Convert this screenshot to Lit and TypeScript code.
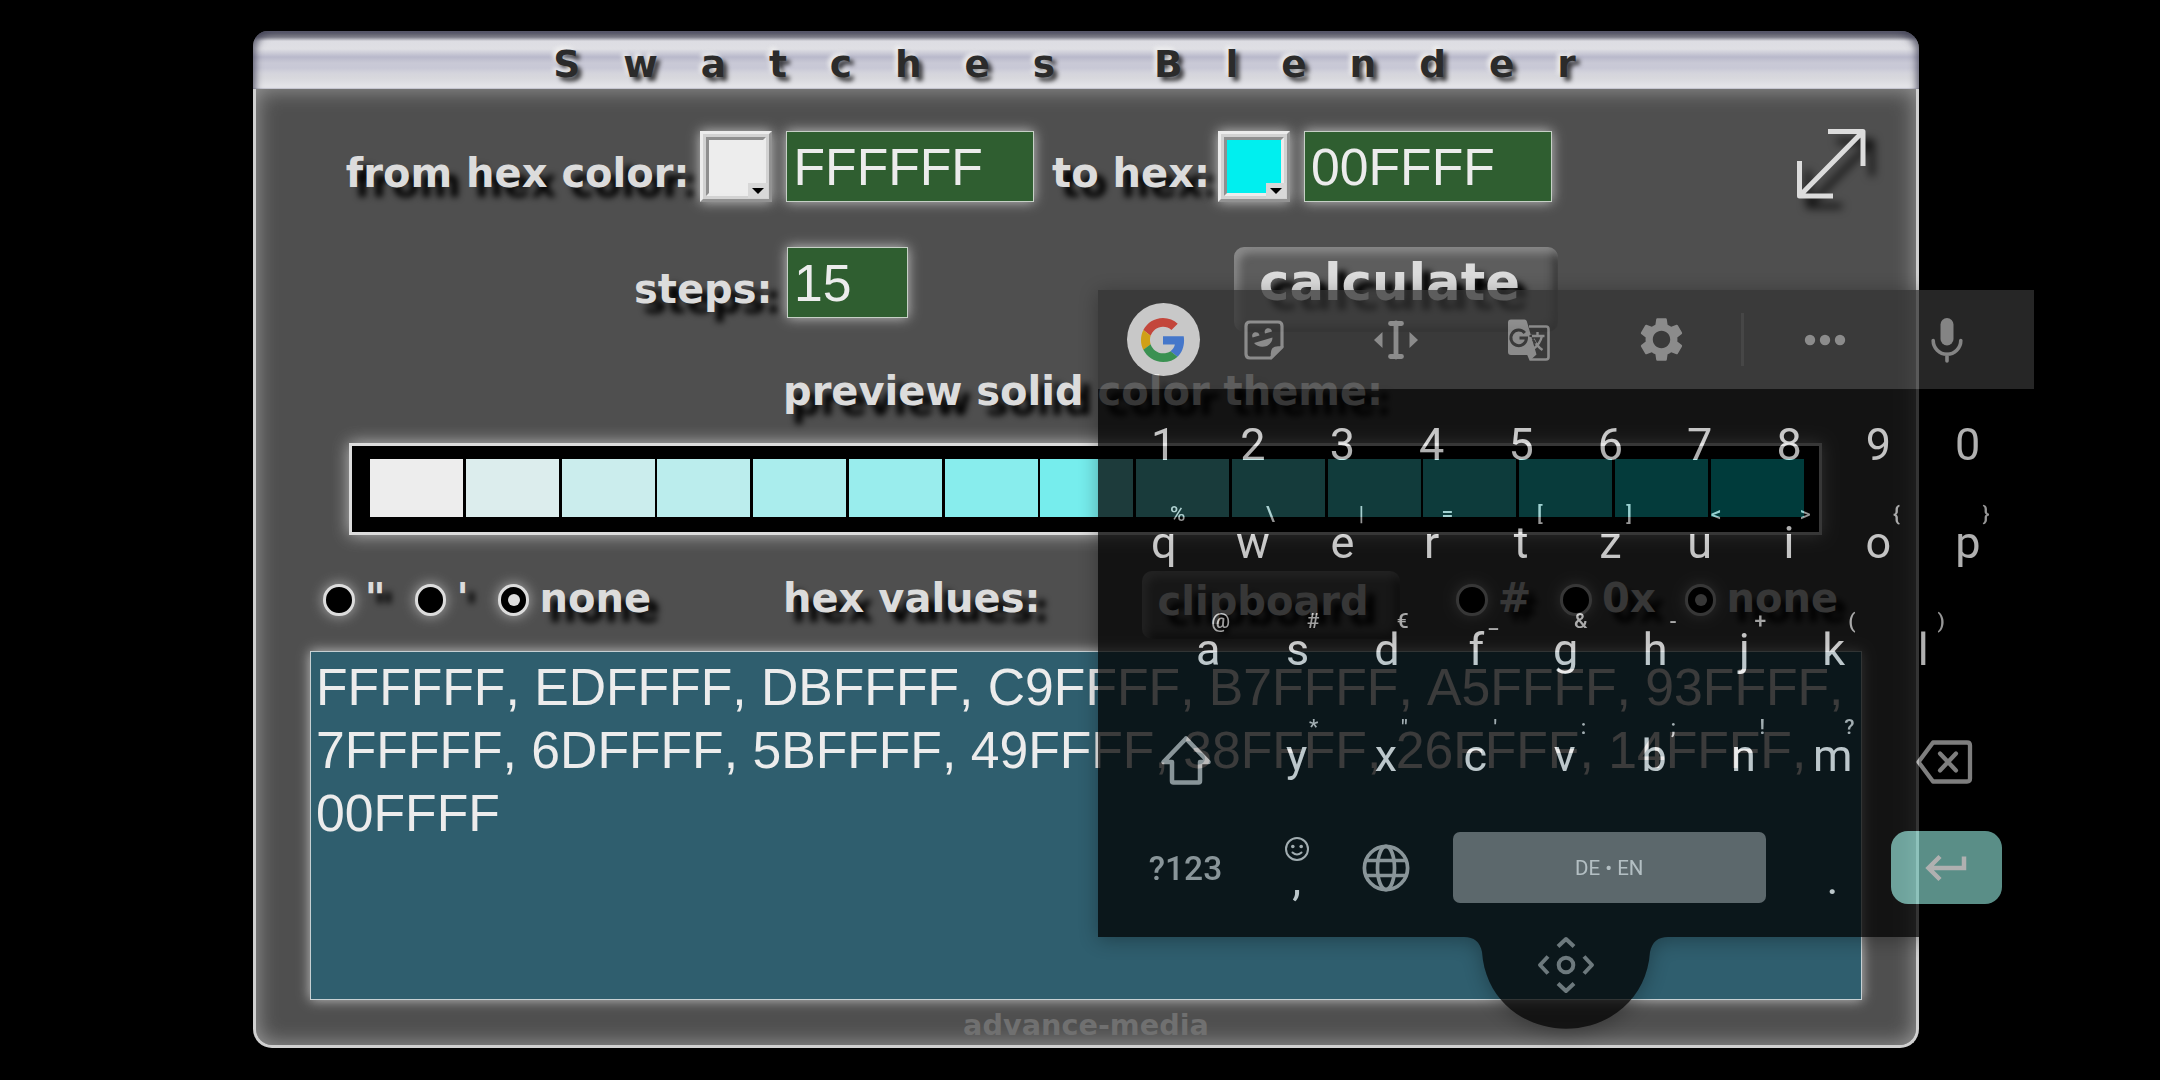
import { LitElement, html, css } from "lit";
import { customElement, property, state } from "lit/decorators.js";
import { classMap } from "lit/directives/class-map.js";

type Key = [string, string?];

const DIGITS: Key[] = [..."1234567890"].map((d) => [d] as Key);
const ROW_Q: Key[] = [
  ["q", "%"],
  ["w", "\\"],
  ["e", "|"],
  ["r", "="],
  ["t", "["],
  ["z", "]"],
  ["u", "<"],
  ["i", ">"],
  ["o", "{"],
  ["p", "}"],
];
const ROW_A: Key[] = [
  ["a", "@"],
  ["s", "#"],
  ["d", "€"],
  ["f", "_"],
  ["g", "&"],
  ["h", "-"],
  ["j", "+"],
  ["k", "("],
  ["l", ")"],
];
const ROW_Y: Key[] = [
  ["y", "*"],
  ["x", '"'],
  ["c", "'"],
  ["v", ":"],
  ["b", ";"],
  ["n", "!"],
  ["m", "?"],
];

@customElement("color-picker-button")
export class ColorPickerButton extends LitElement {
  static styles = css`
    :host {
      display: block;
      flex: none;
      box-sizing: border-box;
      width: 72px;
      height: 71px;
      padding: 3px;
      border: 3px solid;
      border-color: #ececec #929292 #929292 #ececec;
      background: #d2d2d2;
      box-shadow: 0 0 12px rgba(236, 236, 236, 0.75);
    }

    .well {
      position: relative;
      box-sizing: border-box;
      height: 59px;
      border: 3px solid;
      border-color: #8f8f8f #ececec #ececec #8f8f8f;
    }

    .drop {
      position: absolute;
      right: -5px;
      bottom: -5px;
      display: block;
      background: #d8d8d8;
    }
  `;

  @property() color = "#fff";

  render() {
    return html`
      <div class="well" style="background:${this.color}">
        <svg class="drop" width="20" height="15" viewBox="0 0 20 15">
          <path d="M4 5h12l-6 6z" fill="#000" />
        </svg>
      </div>
    `;
  }
}

@customElement("floating-keyboard")
export class FloatingKeyboard extends LitElement {
  static styles = css`
    :host {
      display: block;
      width: 936px;
      opacity: 0.75;
      filter: drop-shadow(0 3px 10px rgba(0, 0, 0, 0.4));
      font-family: Roboto, sans-serif;
      font-weight: 400;
      color: #ebebeb;
    }

    svg {
      display: block;
      flex: none;
    }

    .toolbar {
      display: flex;
      align-items: center;
      box-sizing: border-box;
      height: 99px;
      padding-left: 28.5px;
      background: #333;
      color: #a0a0a0;
    }

    .google {
      display: flex;
      align-items: center;
      justify-content: center;
      width: 73.5px;
      height: 73.5px;
      border-radius: 50%;
      background: #f1f1f1;
    }

    .tool {
      display: flex;
      justify-content: center;
      width: 132.6px;
    }

    .tool.first {
      margin-left: -2.5px;
    }

    .divider {
      width: 3px;
      height: 53px;
      margin-left: 13px;
      background: #444;
    }

    .dots {
      margin-left: 60px;
    }

    .mic {
      margin-left: 84px;
      color: #b0b0b0;
    }

    .keys {
      box-sizing: border-box;
      height: 548px;
      padding: 29.5px 21px 0;
      background: #000;
    }

    .row {
      display: flex;
      height: 107px;
    }

    .row.digits {
      height: 98px;
    }

    .row.inset {
      padding-left: 44.7px;
      height: 106px;
    }

    .row.letters {
      height: 101.5px;
    }

    .row.bottom {
      height: 73px;
      align-items: center;
    }

    .key {
      position: relative;
      width: 89.35px;
      font-size: 45px;
      line-height: 52px;
      text-align: center;
    }

    .hint {
      position: absolute;
      right: 23px;
      top: -15px;
      font-size: 21px;
      font-weight: 500;
      line-height: 24px;
      color: #c8c8c8;
    }

    .wide {
      display: flex;
      justify-content: center;
      width: 133px;
      color: #a8a8a8;
    }

    .shift {
      margin-top: 5px;
    }

    .back {
      margin-top: 9px;
    }

    .symbols {
      font-size: 33.5px;
      font-weight: 500;
      line-height: 40px;
      padding-top: 3px;
    }

    .comma,
    .globe,
    .period {
      display: flex;
      width: 89.35px;
      flex-direction: column;
      align-items: center;
      font-size: 45px;
      line-height: 52px;
      color: #ebebeb;
    }

    .comma {
      height: 65px;
      margin-top: 2px;
      color: #c8c8c8;
    }

    .comma span {
      margin-top: -8px;
      color: #ebebeb;
    }

    .globe {
      color: #a8a8a8;
    }

    .period {
      padding-top: 22px;
    }

    .space {
      width: 313px;
      height: 71px;
      margin: 0 22px;
      border-radius: 7px;
      background: #6c6c6c;
      color: #e0e0e0;
      font-size: 20.5px;
      line-height: 72px;
      text-align: center;
    }

    .enter {
      display: flex;
      align-items: center;
      justify-content: center;
      width: 111px;
      height: 73px;
      margin-left: 13.5px;
      border-radius: 17px;
      background: #78beb5;
      color: #ebebeb;
    }

    .handle {
      margin: -1px 0 0 366px;
    }
  `;

  private renderKeys(keys: Key[]) {
    return keys.map(
      ([label, hint]) => html`
        <div class="key">
          ${label}${hint ? html`<span class="hint">${hint}</span>` : null}
        </div>
      `
    );
  }

  private renderToolbar() {
    return html`
      <div class="toolbar">
        <div class="google">
          <svg width="44" height="44" viewBox="0 0 48 48">
            <path
              fill="#EA4335"
              d="M24 9.5c3.54 0 6.71 1.22 9.21 3.6l6.85-6.85C35.9 2.38 30.47 0 24 0 14.62 0 6.51 5.38 2.56 13.22l7.98 6.19C12.43 13.72 17.74 9.5 24 9.5z"
            />
            <path
              fill="#4285F4"
              d="M46.98 24.55c0-1.57-.15-3.09-.38-4.55H24v9.02h12.94c-.58 2.96-2.26 5.48-4.78 7.18l7.73 6c4.51-4.18 7.09-10.36 7.09-17.65z"
            />
            <path
              fill="#FBBC05"
              d="M10.53 28.59c-.48-1.45-.76-2.99-.76-4.59s.27-3.14.76-4.59l-7.98-6.19C.92 16.46 0 20.12 0 24c0 3.88.92 7.54 2.56 10.78l7.97-6.19z"
            />
            <path
              fill="#34A853"
              d="M24 48c6.48 0 11.93-2.13 15.89-5.81l-7.73-6c-2.15 1.45-4.92 2.3-8.16 2.3-6.26 0-11.57-4.22-13.47-9.91l-7.98 6.19C6.51 42.62 14.62 48 24 48z"
            />
          </svg>
        </div>
        <div class="tool first">
          <svg width="42" height="42" viewBox="0 0 42 42">
            <path
              d="M7 3h28q4 0 4 4v21L28 39H7q-4 0-4-4V7q0-4 4-4z"
              fill="none"
              stroke="currentColor"
              stroke-width="3.2"
            />
            <path
              d="M39 28h-4q-6.5 0-6.5 6.500v4.500z"
              fill="currentColor"
              stroke="currentColor"
              stroke-width="1.5"
            />
            <path
              d="M9.500 18.500a3.700 3.700 0 1 1 7-2zM22 14.500a3.700 3.700 0 1 1 7-2zM11 24l18.500-5.500q0 5.500-5.500 8.500-8 2.500-13-3z"
              fill="currentColor"
            />
          </svg>
        </div>
        <div class="tool">
          <svg width="46" height="40" viewBox="0 0 46 40">
            <path
              d="M17.5 3.5h11M17.5 36.5h11M23 3v34"
              fill="none"
              stroke="currentColor"
              stroke-width="4.8"
              stroke-linecap="round"
            />
            <path d="M9.5 12v16L1 20zM36.5 12v16l8.5-8z" fill="currentColor" />
          </svg>
        </div>
        <div class="tool">
          <svg width="44" height="44" viewBox="0 0 44 44">
            <path
              d="M22 8.5h17q2.500 0 2.500 2.500v28q0 2.500-2.500 2.500H23.500L20 33"
              fill="none"
              stroke="currentColor"
              stroke-width="2.6"
            />
            <path
              d="M4 1.500h13.500q1.800 0 2.300 1.800l9.700 33.200-6 5.500-1.800-5H4q-3 0-3-3v-29.500q0-3 3-3z"
              fill="currentColor"
            />
            <path
              d="M17.800 15A7.800 7.800 0 1 0 19.500 20H12.500"
              fill="none"
              stroke="#333"
              stroke-width="3"
            />
            <path
              d="M24 18h13.500M30.500 14v4M35 18q-2 8.500-9.500 13.500M26.500 21q3 7 9 11"
              fill="none"
              stroke="currentColor"
              stroke-width="2.4"
            />
            <path
              d="M22.500 18h2.500M26 21.500l2.500 4"
              fill="none"
              stroke="#333"
              stroke-width="2"
            />
          </svg>
        </div>
        <div class="tool">
          <svg width="51" height="51" viewBox="0 0 24 24">
            <path
              fill="currentColor"
              d="M19.43 12.98c.04-.32.07-.64.07-.98s-.03-.66-.07-.98l2.11-1.65c.19-.15.24-.42.12-.64l-2-3.46c-.12-.22-.39-.3-.61-.22l-2.49 1c-.52-.4-1.08-.73-1.69-.98l-.38-2.65C14.46 2.18 14.25 2 14 2h-4c-.25 0-.46.18-.49.42l-.38 2.65c-.61.25-1.17.59-1.69.98l-2.49-1c-.23-.09-.49 0-.61.22l-2 3.46c-.13.22-.07.49.12.64l2.11 1.65c-.04.32-.07.65-.07.98s.03.66.07.98l-2.11 1.65c-.19.15-.24.42-.12.64l2 3.46c.12.22.39.3.61.22l2.49-1c.52.4 1.08.73 1.69.98l.38 2.65c.03.24.24.42.49.42h4c.25 0 .46-.18.49-.42l.38-2.65c.61-.25 1.17-.59 1.69-.98l2.49 1c.23.09.49 0 .61-.22l2-3.46c.12-.22.07-.49-.12-.64l-2.11-1.65zM12 16.1c-2.26 0-4.1-1.84-4.1-4.1s1.84-4.1 4.1-4.1 4.1 1.84 4.1 4.1-1.84 4.1-4.1 4.1z"
            />
          </svg>
        </div>
        <div class="divider"></div>
        <svg class="dots" width="42" height="12" viewBox="0 0 42 12">
          <circle cx="6" cy="6" r="5.2" fill="currentColor" />
          <circle cx="21" cy="6" r="5.2" fill="currentColor" />
          <circle cx="36" cy="6" r="5.2" fill="currentColor" />
        </svg>
        <svg class="mic" width="34" height="46" viewBox="0 0 34 46">
          <rect x="10.5" y="1" width="13" height="27.5" rx="6.5" fill="currentColor" />
          <path
            d="M3.200 23.500a13.800 13.800 0 0 0 27.600 0M17 37v7"
            fill="none"
            stroke="currentColor"
            stroke-width="3.6"
            stroke-linecap="round"
          />
        </svg>
      </div>
    `;
  }

  render() {
    return html`
      ${this.renderToolbar()}
      <div class="keys">
        <div class="row digits">${this.renderKeys(DIGITS)}</div>
        <div class="row">${this.renderKeys(ROW_Q)}</div>
        <div class="row inset">${this.renderKeys(ROW_A)}</div>
        <div class="row letters">
          <div class="wide">
            <svg class="shift" width="52" height="50" viewBox="0 0 52 50">
              <path
                d="M26 3.500L3.500 27H12v19q0 1.500 1.500 1.500h25q1.500 0 1.500-1.500V27h8.500z"
                fill="none"
                stroke="currentColor"
                stroke-width="4.5"
                stroke-linejoin="round"
              />
            </svg>
          </div>
          ${this.renderKeys(ROW_Y)}
          <div class="wide">
            <svg class="back" width="58" height="46" viewBox="0 0 58 46">
              <path
                d="M18 3.500h34q3 0 3 3v33q0 3-3 3H18L3.500 23z"
                fill="none"
                stroke="currentColor"
                stroke-width="4.3"
                stroke-linejoin="round"
              />
              <path
                d="M25 14.500l16 17M41 14.500l-16 17"
                stroke="currentColor"
                stroke-width="4.3"
                stroke-linecap="round"
              />
            </svg>
          </div>
        </div>
        <div class="row bottom">
          <div class="wide symbols">?123</div>
          <div class="comma">
            <svg width="26" height="26" viewBox="0 0 26 26">
              <circle
                cx="13"
                cy="13"
                r="11"
                fill="none"
                stroke="currentColor"
                stroke-width="2"
              />
              <circle cx="8.8" cy="10.5" r="1.8" fill="currentColor" />
              <circle cx="17.2" cy="10.5" r="1.8" fill="currentColor" />
              <path
                d="M8.500 16.500q4.500 4 9 0"
                fill="none"
                stroke="currentColor"
                stroke-width="2"
                stroke-linecap="round"
              />
            </svg>
            <span>,</span>
          </div>
          <div class="globe">
            <svg width="48" height="48" viewBox="0 0 48 48">
              <g fill="none" stroke="currentColor" stroke-width="3.7">
                <circle cx="24" cy="24" r="21.6" />
                <ellipse cx="24" cy="24" rx="8.5" ry="21.6" />
                <path d="M4 16.500h40M4 31.500h40" />
              </g>
            </svg>
          </div>
          <div class="space">DE • EN</div>
          <div class="period"><span>.</span></div>
          <div class="enter">
            <svg width="44" height="28" viewBox="0 0 44 28">
              <path
                d="M40 2.500v11.500H5M16 2.500L4.500 14 16 25.500"
                fill="none"
                stroke="currentColor"
                stroke-width="4.5"
              />
            </svg>
          </div>
        </div>
      </div>
      <svg class="handle" width="204" height="93" viewBox="0 0 204 93">
        <path
          d="M0 0H204V1C194 1 188 6 186 16C183 62 146 92.700 102 92.700S21 62 18 16C16 6 10 1 0 1z"
          fill="#000"
        />
        <g
          fill="none"
          stroke="#828282"
          stroke-width="4"
          stroke-linejoin="round"
        >
          <circle cx="102" cy="29" r="7.3" />
          <path
            d="M94 10.500l8-7.500 8 7.500M94 47.500l8 7.500 8-7.500M84 20.500L76 29l8 8.500M120 20.500l8 8.500-8 8.500"
          />
        </g>
      </svg>
    `;
  }
}

@customElement("app-root")
export class SwatchesBlender extends LitElement {
  static styles = css`
    :host {
      display: block;
      position: relative;
      box-sizing: border-box;
      width: 2160px;
      height: 1080px;
      padding: 31px 0 0 253px;
      overflow: hidden;
      background: #000;
      color: #dcdcdc;
      font: bold 40px/46px "DejaVu Sans", Verdana, sans-serif;
    }

    .panel {
      width: 1666px;
    }

    header {
      height: 58px;
      border-radius: 15px 18px 0 0;
      background: linear-gradient(
        #8a8a98 0,
        #73737f 2px,
        #84848f 6px,
        #dddde3 10px,
        #dfdfe4 18px,
        #b9b9cb 26px,
        #c9c9d6 32px,
        #c8c8d6 37px,
        #d4d4dc 42px,
        #d8d8dd 47px,
        #e4e4e8 55px,
        #e0e0e6 57px,
        #aaaab8 58px
      );
      box-shadow: inset 7px 5px 7px -4px rgba(60, 60, 80, 0.7),
        inset -7px 5px 7px -4px rgba(60, 60, 80, 0.7);
      color: #2b2b2b;
      font-size: 37.5px;
      line-height: 66px;
      letter-spacing: 42.9px;
      text-align: center;
      white-space: nowrap;
      text-shadow: -3px -3px 4px rgba(240, 240, 240, 0.9),
        4px 4px 4px rgba(0, 0, 0, 0.7);
    }

    main {
      box-sizing: border-box;
      height: 959px;
      padding-top: 42px;
      border: solid #d0d0d0;
      border-width: 0 3px 3px;
      border-radius: 0 0 19px 19px;
      background: #4f4f4f;
      box-shadow: inset 0 0 22px rgba(190, 190, 190, 0.7);
      text-shadow: 9px 10px 6px #000;
      white-space: nowrap;
    }

    .row {
      display: flex;
      align-items: flex-start;
    }

    .caption {
      padding-top: 18.5px;
      text-align: right;
    }

    .from {
      width: 433.5px;
      margin-right: 10.5px;
    }

    .to {
      width: 176px;
      margin-right: 7.5px;
    }

    .steps {
      width: 516.5px;
      margin-right: 14px;
    }

    input,
    textarea {
      display: block;
      box-sizing: border-box;
      margin: 0;
      border: 1.5px solid rgba(236, 236, 236, 0.8);
      border-radius: 0;
      outline: none;
      color: #ececec;
      font: 51.7px/63px "Liberation Sans", Arial, sans-serif;
      font-kerning: none;
      box-shadow: 0 0 12px rgba(236, 236, 236, 0.75);
    }

    input {
      height: 71px;
      padding: 0 6.5px;
      background: #2f5e30;
    }

    .hex {
      width: 248px;
      margin-left: 14px;
    }

    .count {
      width: 121.5px;
    }

    .expand {
      margin: -2px 0 0 245px;
      filter: drop-shadow(9px 10px 4px rgba(0, 0, 0, 0.8));
    }

    .second {
      height: 85px;
      margin-top: 45px;
    }

    button {
      display: block;
      box-sizing: border-box;
      margin: 0;
      border: 0;
      border-radius: 10px;
      background: #5d5d5d;
      box-shadow: inset 5px 6px 9px rgba(170, 170, 170, 0.6),
        inset -5px -5px 8px rgba(45, 45, 45, 0.8);
      color: inherit;
      font: inherit;
      text-align: left;
      text-shadow: inherit;
    }

    .calculate {
      width: 324px;
      height: 85px;
      margin-left: 325.5px;
      padding: 0 0 14px 25.5px;
      font-size: 51.3px;
      line-height: 71px;
    }

    .preview {
      margin-top: 36px;
      padding-left: 527px;
    }

    .theme {
      display: flex;
      box-sizing: border-box;
      gap: 2.75px;
      width: 1473px;
      height: 92px;
      margin: 29px 0 0 93px;
      padding: 13px 15px 15px 18px;
      border: 3px solid #dcdcdc;
      background: #000;
      box-shadow: 0 0 16px rgba(236, 236, 236, 0.7);
    }

    .shade {
      width: 93px;
      height: 58px;
      flex: none;
    }

    .options {
      height: 68px;
      margin-top: 36px;
      padding-left: 67px;
    }

    .radios {
      display: flex;
      gap: 29.2px;
      padding-top: 4px;
    }

    .radios.left {
      width: 460px;
    }

    .choice {
      display: flex;
      gap: 10.2px;
    }

    .dot {
      display: flex;
      align-items: center;
      justify-content: center;
      box-sizing: border-box;
      width: 31.5px;
      height: 31.5px;
      margin-top: 9px;
      border: 3px solid #dcdcdc;
      border-radius: 50%;
      background: #000;
      box-shadow: 0 0 14px rgba(236, 236, 236, 0.6);
    }

    .dot.checked::after {
      content: "";
      width: 12px;
      height: 12px;
      border-radius: 50%;
      background: #dcdcdc;
    }

    .values {
      width: 358.5px;
      padding-top: 4px;
    }

    .clipboard {
      width: 258.5px;
      height: 68px;
      margin-right: 56px;
      padding: 0 0 8px 16px;
      line-height: 60px;
    }

    textarea {
      width: 1552px;
      height: 349px;
      margin: 12px 0 0 54px;
      padding: 3.5px 5px;
      overflow: hidden;
      resize: none;
      background: #2f5e6e;
    }

    footer {
      margin-top: 9px;
      color: #707070;
      font-size: 28.7px;
      line-height: 33px;
      text-align: center;
      text-shadow: none;
    }

    floating-keyboard {
      position: absolute;
      left: 1098px;
      top: 290px;
    }
  `;

  @state() private from = "FFFFFF";
  @state() private to = "00FFFF";
  @state() private steps = 15;
  @state() private values = [
    "FFFFFF",
    "EDFFFF",
    "DBFFFF",
    "C9FFFF",
    "B7FFFF",
    "A5FFFF",
    "93FFFF",
    "7FFFFF",
    "6DFFFF",
    "5BFFFF",
    "49FFFF",
    "38FFFF",
    "26FFFF",
    "14FFFF",
    "00FFFF",
  ];

  // slightly dimmed version of a hex value
  private shade(hex: string) {
    const [r, g, b] = [0, 2, 4].map((i) =>
      Math.round(parseInt(hex.slice(i, i + 2), 16) * 0.928)
    );
    return `rgb(${r}, ${g}, ${b})`;
  }

  private renderChoice(label: string, checked = false) {
    return html`
      <div class="choice">
        <span class=${classMap({ dot: true, checked })}></span>
        <span>${label}</span>
      </div>
    `;
  }

  render() {
    return html`
      <div class="panel">
        <header>Swatches Blender</header>
        <main>
          <div class="row">
            <div class="caption from">from hex color:</div>
            <color-picker-button
              .color=${this.shade(this.from)}
            ></color-picker-button>
            <input class="hex" .value=${this.from} />
            <div class="caption to">to hex:</div>
            <color-picker-button color="#00efef"></color-picker-button>
            <input class="hex" .value=${this.to} />
            <svg class="expand" width="70" height="70" viewBox="0 0 70 70">
              <path
                d="M31 2.500H66V37M2.500 32V67H36M3 66.500L65.500 3"
                fill="none"
                stroke="#dcdcdc"
                stroke-width="5"
                stroke-linejoin="round"
              />
            </svg>
          </div>
          <div class="row second">
            <div class="caption steps">steps:</div>
            <input class="count" .value=${String(this.steps)} />
            <button class="calculate">calculate</button>
          </div>
          <div class="preview">preview solid color theme:</div>
          <div class="theme">
            ${this.values.map(
              (v) =>
                html`<div class="shade" style="background:${this.shade(v)}"></div>`
            )}
          </div>
          <div class="row options">
            <div class="radios left">
              ${this.renderChoice('"')} ${this.renderChoice("'")}
              ${this.renderChoice("none", true)}
            </div>
            <div class="values">hex values:</div>
            <button class="clipboard">clipboard</button>
            <div class="radios">
              ${this.renderChoice("#")} ${this.renderChoice("0x")}
              ${this.renderChoice("none", true)}
            </div>
          </div>
          <textarea spellcheck="false" .value=${this.values.join(", ")}></textarea>
          <footer>advance-media</footer>
        </main>
      </div>
      <floating-keyboard></floating-keyboard>
    `;
  }
}
